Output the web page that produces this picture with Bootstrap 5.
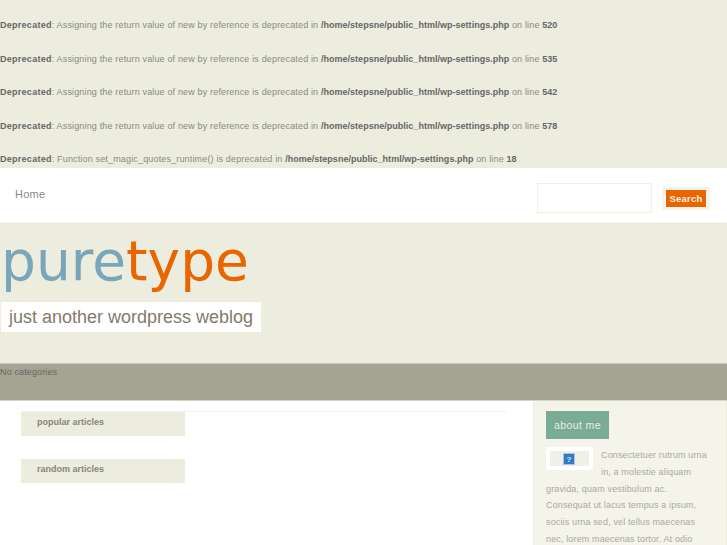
<!DOCTYPE html>
<html lang="en">
<head>
<meta charset="utf-8">
<title>puretype</title>
<link href="https://cdn.jsdelivr.net/npm/bootstrap@5.3.0/dist/css/bootstrap.min.css" rel="stylesheet">
<style>
html,body{height:545px;overflow:hidden}
body{background:#fff;font-family:"Liberation Sans",Arial,sans-serif;font-size:9px;line-height:16.8px;color:#777;letter-spacing:.16px}
.errs{background:#ecedde;height:168px;padding-top:17px;color:#8a8a80}
.errs p{margin:0 0 16.8px;height:16.8px;white-space:nowrap}
.errs b{color:#666;letter-spacing:.02px}
.errs b.lead-word{letter-spacing:.27px}
.topbar{height:55px;border-bottom:1px solid #f4f4eb;padding:0 17px 0 15px;background:#fff}
.homelink{font-size:11px;color:#8a8a7c;letter-spacing:.25px;text-decoration:none;margin-top:18px}
.searchbox{width:115px;height:30px;border:1px solid #f0f0e4;background:#fff;margin-top:15px;margin-right:10px;border-radius:0;padding:0}
.searchwrap{background:#f4f4eb;padding:3px 4px;height:23px;margin-top:19px}
.searchbtn{display:block;background:#e86500;color:#f6efe5;font-weight:700;font-size:9.5px;line-height:16px;height:17px;width:40px;border:0;padding:0;border-radius:0;letter-spacing:.25px}
.mast{background:#ecedde;height:140px;padding:6px 0 0 1px}
.brand-name{font-family:"DejaVu Sans",sans-serif;font-size:55px;line-height:64px;letter-spacing:0;color:#7ba5b8;margin:0;font-weight:400}
.brand-name span{color:#e86500}
.tagline{display:inline-block;background:#fff;color:#85796a;font-size:18px;line-height:30px;height:30px;padding:0 8px;margin:9px 0 0;letter-spacing:0}
.catbar{background:#a5a391;height:38px;color:#666;border-top:1px solid #c9c8b6;border-bottom:1px solid #d5d4c5;line-height:16px;letter-spacing:.13px}
.maincol{width:533px;padding:10px 25px 0 21px}
.poptab{width:164px;height:24px;background:#ecedde;color:#85857a;font-weight:700;padding:2px 0 0 16px;margin-bottom:23px;letter-spacing:0}
.rule{height:1px;background:#f4f4eb;width:486px}
.sidecol{width:194px;height:144px;background:#f4f4eb;border-left:1px solid #ecedde;border-right:1px solid #ecedde;padding:10px 0 0 12px;color:#a9a99c}
.abouthead{display:block;width:63px;height:28px;background:#7aab94;color:#e6efe6;font-size:10.5px;line-height:28px;text-align:center;letter-spacing:.4px;margin-bottom:8px}
.sidecol p{margin:0;width:163px;letter-spacing:.14px}
.thumbwrap{float:left;width:47px;height:23px;background:#fff;padding:4px;margin-right:8px;display:flex}
.thumbin{flex:1;background:#f0f0e6;display:flex;align-items:center;justify-content:center;padding-right:1px}
</style>
</head>
<body>
<div class="errs">
<p><b class="lead-word">Deprecated</b>: Assigning the return value of new by reference is deprecated in <b>/home/stepsne/public_html/wp-settings.php</b> on line <b>520</b></p>
<p><b class="lead-word">Deprecated</b>: Assigning the return value of new by reference is deprecated in <b>/home/stepsne/public_html/wp-settings.php</b> on line <b>535</b></p>
<p><b class="lead-word">Deprecated</b>: Assigning the return value of new by reference is deprecated in <b>/home/stepsne/public_html/wp-settings.php</b> on line <b>542</b></p>
<p><b class="lead-word">Deprecated</b>: Assigning the return value of new by reference is deprecated in <b>/home/stepsne/public_html/wp-settings.php</b> on line <b>578</b></p>
<p><b class="lead-word">Deprecated</b>: Function set_magic_quotes_runtime() is deprecated in <b>/home/stepsne/public_html/wp-settings.php</b> on line <b>18</b></p>
</div>
<nav class="topbar d-flex align-items-start justify-content-between">
<a class="homelink" href="#">Home</a>
<form class="d-flex align-items-start" onsubmit="return false">
<input class="searchbox" type="text" aria-label="Search">
<div class="searchwrap"><button class="searchbtn" type="submit">Search</button></div>
</form>
</nav>
<header class="mast">
<h1 class="brand-name">pure<span>type</span></h1>
<div class="tagline">just another wordpress weblog</div>
</header>
<div class="catbar">No categories</div>
<div class="d-flex">
<main class="maincol">
<div class="rule"></div>
<div class="poptab">popular articles</div>
<div class="poptab">random articles</div>
</main>
<aside class="sidecol">
<div class="abouthead">about me</div>
<p><span class="thumbwrap"><span class="thumbin"><svg width="12" height="12" viewBox="0 0 12 12"><rect width="12" height="12" fill="#a9c4e4"/><rect x="1" y="1" width="10" height="10" fill="#2f7cc4"/><text x="6" y="9" font-size="8" font-weight="700" text-anchor="middle" fill="#dfeaf5" font-family="Liberation Sans">?</text></svg></span></span>Consectetuer rutrum urna in, a molestie aliquam gravida, quam vestibulum ac. Consequat ut lacus tempus a ipsum, sociis urna sed, vel tellus maecenas nec, lorem maecenas tortor. At odio</p>
</aside>
</div>
<script src="https://cdn.jsdelivr.net/npm/bootstrap@5.3.0/dist/js/bootstrap.bundle.min.js"></script>
</body>
</html>
